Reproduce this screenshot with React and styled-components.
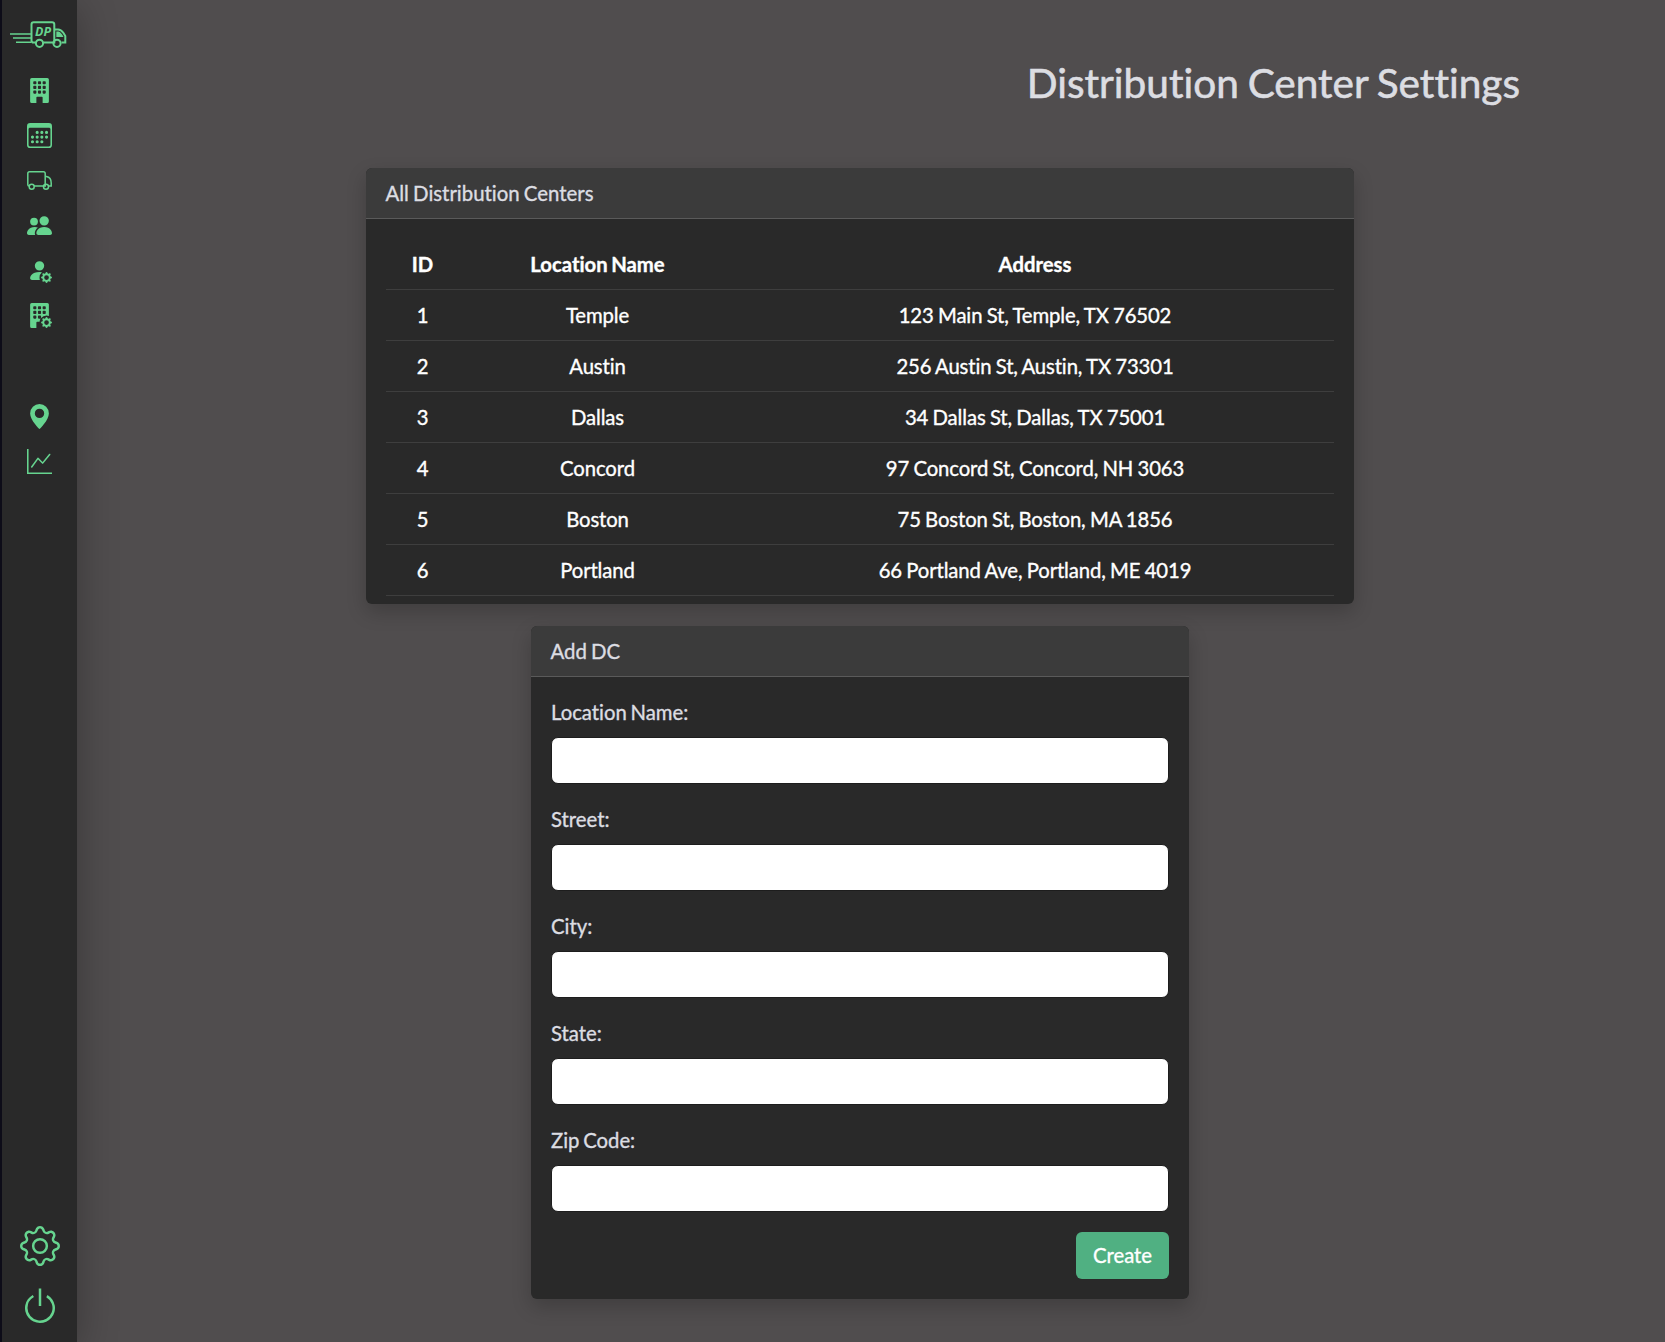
import React from 'react';
import styled, { createGlobalStyle } from 'styled-components';
import {
  BsBuildingFill, BsCalendar3, BsPeopleFill, BsPersonFillGear,
  BsBuildingFillGear, BsGeoAltFill, BsGraphUp, BsGear, BsPower,
} from 'react-icons/bs';

const GlobalStyle = createGlobalStyle`
  * { box-sizing: border-box; }
  html, body { margin: 0; height: 100%; background: #504d4e; }
  body {
    font-family: Lato, 'Open Sans', sans-serif;
    font-size: 20.3px;
    line-height: 30px;
    font-variant-ligatures: none;
    word-spacing: -0.07em;
    -webkit-text-stroke: 0.35px currentColor;
    color: #dcdde2;
    overflow: hidden;
  }
`;

const Page = styled.div`
  display: flex;
  height: 1342px;
  background: #504d4e;
`;

const Sidebar = styled.nav`
  display: flex;
  flex-direction: column;
  align-items: center;
  flex: 0 0 77px;
  padding: 21px 0 16px;
  border-left: 2px solid #0d0c18;
  background: #292929;
  box-shadow: 0 8px 40px rgba(0, 0, 0, 0.3);
  color: #66d48f;
`;

const NavGroup = styled.div`
  display: flex;
  flex-direction: column;
  gap: 20px;
  margin-top: ${(p) => p.$top}px;
  svg { display: block; width: 25px; height: 25px; }
`;

const NavFooter = styled.div`
  display: flex;
  flex-direction: column;
  gap: 20px;
  margin-top: auto;
  svg { display: block; width: 40px; height: 40px; }
`;

const Main = styled.main`
  flex: 1;
  display: flex;
  flex-direction: column;
  align-items: center;
  padding: 0 104px 0 82px;
`;

const Title = styled.h1`
  align-self: flex-end;
  margin: 58px 41px 60px 0;
  font-size: 40.6px;
  line-height: 50px;
  font-weight: 400;
  word-spacing: -0.04em;
  -webkit-text-stroke-width: 0.6px;
`;

const Card = styled.section`
  width: ${(p) => p.$width}px;
  height: ${(p) => p.$height}px;
  margin-bottom: 22px;
  border-radius: 6px;
  background: #292929;
  box-shadow: 0 8px 20px rgba(0, 0, 0, 0.2);
  overflow: hidden;
  flex: none;
`;

const CardHeader = styled.header`
  height: 51px;
  padding: 10px 20px 0 19.5px;
  background: #3b3b3b;
  border-bottom: 1px solid #5a5a5a;
  font-size: 20.4px;
  word-spacing: -0.05em;
`;

const TableWrap = styled.div`
  padding: 19px 20px;
`;

const Table = styled.table`
  width: 100%;
  table-layout: fixed;
  border-collapse: collapse;
  color: #fff;
  text-align: center;

  td {
    letter-spacing: -0.1px;
    word-spacing: -0.04em;
  }
`;

const Cell = styled.td`
  height: 51px;
  padding: ${(p) => (p.$head ? '2px 0 0' : '0')};
  border-bottom: 1px solid #3e3e3e;
  font-weight: ${(p) => (p.$head ? 700 : 400)};
  width: ${(p) => p.$width || 'auto'};
`;

const Form = styled.form`
  display: flex;
  flex-direction: column;
  padding: 20px 20px 0;
`;

const Field = styled.label`
  display: flex;
  flex-direction: column;
  gap: 10px;
  height: 107px;
`;

const Input = styled.input`
  height: 47px;
  border: 1px solid #1d1d1d;
  border-radius: 7px;
  background: #fff;
`;

const CreateButton = styled.button`
  align-self: flex-end;
  width: 93px;
  height: 47px;
  padding: 0 0 1px;
  border: 0;
  border-radius: 6px;
  background: #50b082;
  color: #fff;
  font: inherit;
`;

const LogoSvg = styled.svg`
  margin-left: -3px;
`;

const Logo = () => (
  <LogoSvg width="58" height="28" viewBox="0 0 58 28" fill="none" stroke="currentColor" strokeWidth="2">
    <path d="M1 13H22M4 17H22M7 21.3H22" strokeWidth="1.5" />
    <path d="M26.500 21.600H24.500Q22.500 21.600 22.500 19.500V3.500Q22.500 1.300 24.700 1.300H43Q45.300 1.300 45.300 3.500V21.600H34.500" />
    <path d="M45.300 8.500H49Q52 8.500 54.500 12L56.300 15V21.600H52.500" />
    <path d="M47.300 10.500H49.500Q52 11 54.500 16H47.300Z" fill="currentColor" stroke="none" />
    <circle cx="30.500" cy="22.300" r="3.600" />
    <circle cx="48" cy="22.300" r="3.600" />
    <text x="26" y="15.200" textLength="16" lengthAdjust="spacingAndGlyphs" fill="currentColor" stroke="none" fontFamily="Noto Sans, sans-serif" fontSize="11.500" fontWeight="700" fontStyle="italic">DP</text>
  </LogoSvg>
);

const Truck = () => (
  <svg viewBox="0 0 25 25" fill="none" stroke="currentColor" strokeWidth="1.500">
    <path d="M2.400 18H2Q.8 18 .8 16.500V5.500Q.8 3.700 2.500 3.700H16.500Q18.200 3.700 18.200 5.500V18H7" />
    <path d="M18.200 8.600H19.500Q24.200 9.500 24.200 15V18H21.500" />
    <circle cx="4.700" cy="18.800" r="2.500" />
    <circle cx="19" cy="18.800" r="2.500" />
  </svg>
);

const centers = [
  [1, 'Temple', '123 Main St, Temple, TX 76502'],
  [2, 'Austin', '256 Austin St, Austin, TX 73301'],
  [3, 'Dallas', '34 Dallas St, Dallas, TX 75001'],
  [4, 'Concord', '97 Concord St, Concord, NH 3063'],
  [5, 'Boston', '75 Boston St, Boston, MA 1856'],
  [6, 'Portland', '66 Portland Ave, Portland, ME 4019'],
];

const fields = ['Location Name:', 'Street:', 'City:', 'State:', 'Zip Code:'];

export default function App() {
  return (
    <Page>
      <GlobalStyle />
      <Sidebar>
        <Logo />
        <NavGroup $top={29}>
          <BsBuildingFill />
          <BsCalendar3 />
          <Truck />
          <BsPeopleFill />
          <BsPersonFillGear />
          <BsBuildingFillGear />
        </NavGroup>
        <NavGroup $top={76}>
          <BsGeoAltFill />
          <BsGraphUp />
        </NavGroup>
        <NavFooter>
          <BsGear />
          <BsPower />
        </NavFooter>
      </Sidebar>
      <Main>
        <Title>Distribution Center Settings</Title>
        <Card $width={988} $height={436}>
          <CardHeader>All Distribution Centers</CardHeader>
          <TableWrap>
            <Table>
              <thead>
                <tr>
                  <Cell as="th" $head $width="73px">ID</Cell>
                  <Cell as="th" $head $width="277px">Location Name</Cell>
                  <Cell as="th" $head>Address</Cell>
                </tr>
              </thead>
              <tbody>
                {centers.map(([id, name, address]) => (
                  <tr key={id}>
                    <Cell>{id}</Cell>
                    <Cell>{name}</Cell>
                    <Cell>{address}</Cell>
                  </tr>
                ))}
              </tbody>
            </Table>
          </TableWrap>
        </Card>
        <Card $width={658} $height={673}>
          <CardHeader>Add DC</CardHeader>
          <Form>
            {fields.map((label) => (
              <Field key={label}>
                {label}
                <Input />
              </Field>
            ))}
            <CreateButton type="button">Create</CreateButton>
          </Form>
        </Card>
      </Main>
    </Page>
  );
}
